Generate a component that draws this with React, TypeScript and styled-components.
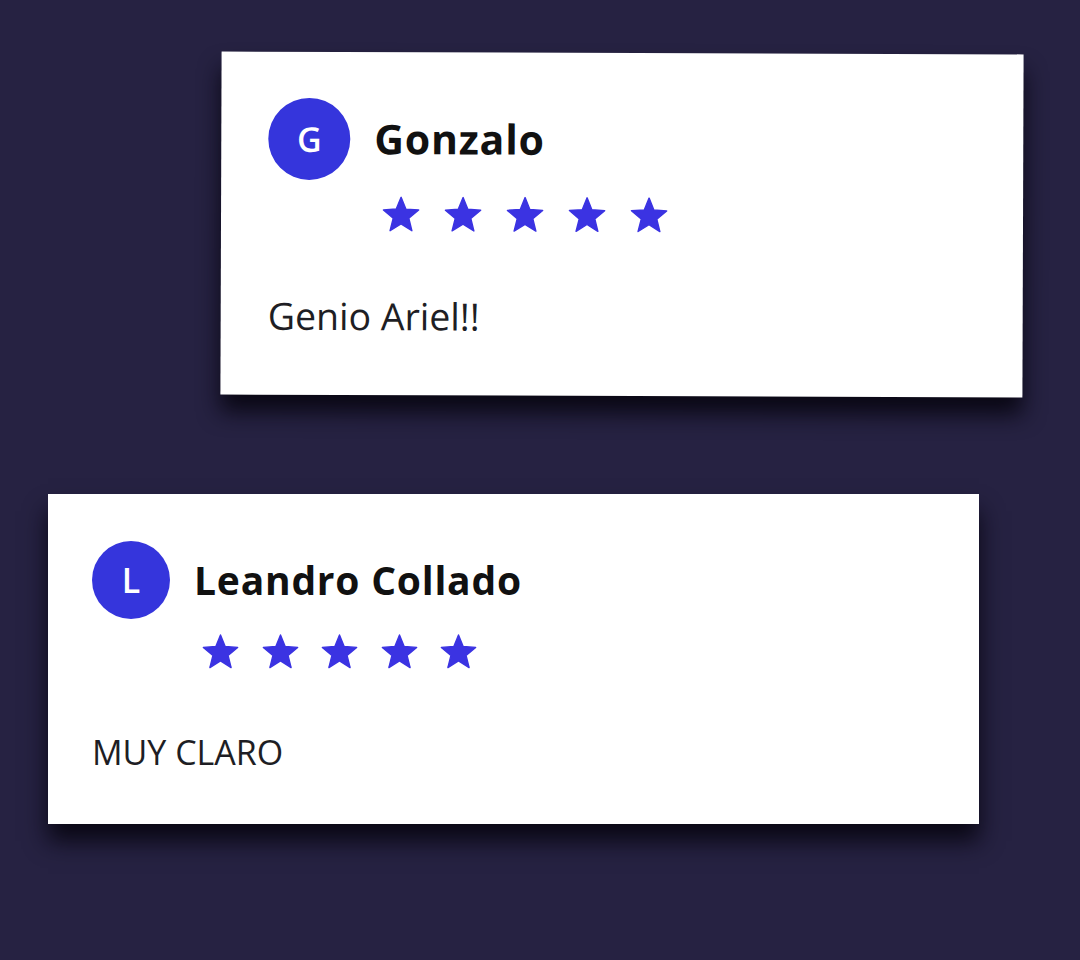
import React from "react";
import styled, { createGlobalStyle } from "styled-components";

const GlobalStyle = createGlobalStyle`
  html, body {
    margin: 0;
    padding: 0;
    background: #262242;
  }
  body {
    font-family: "Open Sans", "Liberation Sans", sans-serif;
  }
`

const Page = styled.main`
  min-height: 960px;
  padding-top: 53px;
  display: flex;
  flex-direction: column;
  align-items: flex-start;
  gap: 98px;
  box-sizing: border-box;
`

const Card = styled.section<{ $left: number; $width: number; $pad: string; $tilt?: number }>`
  margin-left: ${p => p.$left}px;
  width: ${p => p.$width}px;
  padding: ${p => p.$pad};
  box-sizing: border-box;
  background: #fff;
  box-shadow: 0 17px 22px rgba(8, 6, 18, 0.95);
  transform: rotate(${p => p.$tilt || 0}deg);
`

const Header = styled.div<{ $gap: number }>`
  display: flex;
  align-items: center;
  gap: ${p => p.$gap}px;
`

const Avatar = styled.div<{ $size: number }>`
  width: ${p => p.$size}px;
  height: ${p => p.$size}px;
  border-radius: 50%;
  background: #3535dc;
  color: #fff;
  display: flex;
  align-items: center;
  justify-content: center;
  font-size: 34px;
  font-weight: 600;
  flex-shrink: 0;
`

const Name = styled.h3<{ $size: number }>`
  margin: 0;
  font-size: ${p => p.$size}px;
  font-weight: 700;
  letter-spacing: 0.02em;
  color: #111;
  line-height: 1.2;
`

const Stars = styled.div<{ $indent: number; $gap: number; $top: number }>`
  display: flex;
  gap: ${p => p.$gap}px;
  margin-left: ${p => p.$indent}px;
  margin-top: ${p => p.$top}px;
  > svg {
    display: block;
  }
`

const Body = styled.p<{ $size: number; $top: number }>`
  margin: ${p => p.$top}px 0 0;
  font-size: ${p => p.$size}px;
  line-height: 1.2;
  color: #1e1e24;
`

function starPoints() {
  const pts: string[] = [];
  const cx = 20, cy = 20.5, R = 19.5, r = 8.6;
  for (let i = 0; i < 10; i++) {
    const rad = i % 2 === 0 ? R : r;
    const a = (-90 + i * 36) * Math.PI / 180;
    pts.push(`${(cx + rad * Math.cos(a)).toFixed(2)},${(cy + rad * Math.sin(a)).toFixed(2)}`);
  }
  return pts.join(" ");
}
const STAR = starPoints();

function Star({ size }: { size: number }) {
  return (
    <svg width={size} height={size * 0.95} viewBox="0 0 40 38">
      <polygon points={STAR} fill="#3b33e2" stroke="#3b33e2" strokeWidth="1.5" strokeLinejoin="round" />
    </svg>
  );
}

const reviews = [
  {
    name: "Gonzalo",
    text: "Genio Ariel!!",
    left: 221, width: 802, pad: "46px 47px 57px", tilt: 0.2,
    avatar: 82, nameSize: 41, textSize: 37.5,
    star: 38, starGap: 24, starTop: 16, textTop: 61,
  },
  {
    name: "Leandro Collado",
    text: "MUY CLARO",
    left: 48, width: 931, pad: "47px 44px 51px", tilt: 0,
    avatar: 78, nameSize: 39, textSize: 34,
    star: 37, starGap: 22.5, starTop: 15, textTop: 63,
  },
];

function App() {
  return (
    <>
      <GlobalStyle />
      <Page>
        {reviews.map(r => (
          <Card key={r.name} $left={r.left} $width={r.width} $pad={r.pad} $tilt={r.tilt}>
            <Header $gap={24}>
              <Avatar $size={r.avatar}>{r.name[0]}</Avatar>
              <Name $size={r.nameSize}>{r.name}</Name>
            </Header>
            <Stars $indent={r.avatar + 32} $gap={r.starGap} $top={r.starTop}>
              {[0, 1, 2, 3, 4].map(i => <Star key={i} size={r.star} />)}
            </Stars>
            <Body $size={r.textSize} $top={r.textTop}>{r.text}</Body>
          </Card>
        ))}
      </Page>
    </>
  );
}

export default App
